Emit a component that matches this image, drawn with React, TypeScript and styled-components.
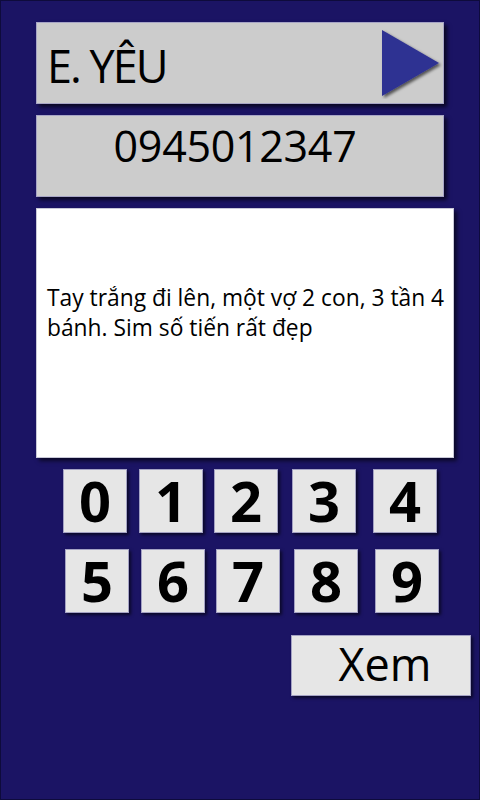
import React from "react";
import styled, { createGlobalStyle } from "styled-components";

const GlobalStyle = createGlobalStyle`
  html, body {
    margin: 0;
    padding: 0;
    background: #1b1464;
  }
  * { box-sizing: border-box; }
`;

const Page = styled.div`
  width: 480px;
  height: 800px;
  background: #1b1464;
  border: 1px solid #0e0b3c;
  padding: 21px 0 0 35px;
  display: flex;
  flex-direction: column;
  font-family: "Open Sans", "Noto Sans", sans-serif;
  color: #000;
  overflow: hidden;
`;

const Bar = styled.div<{ $centered?: boolean }>`
  width: 408px;
  height: 82px;
  background: #cccccc;
  border: 1px solid #a7a5c6;
  box-shadow: 3px 3px 4px rgba(0, 0, 0, 0.65);
  display: flex;
  align-items: ${(p) => (p.$centered ? "flex-start" : "center")};
  justify-content: ${(p) => (p.$centered ? "center" : "space-between")};
  padding: ${(p) => (p.$centered ? "4px 10px 0 0" : "0 0 0 10px")};
  & + & {
    margin-top: 11px;
  }
`;

const Name = styled.span`
  font-size: 45px;
  letter-spacing: -2px;
  line-height: 1;
  margin-top: 4px;
`;

const Phone = styled.span`
  font-size: 43px;
  line-height: 1.2;
  letter-spacing: -0.3px;
`;

const PlayIcon = styled.svg`
  width: 62px;
  height: 70px;
  display: block;
  margin-top: 2px;
`;

const Message = styled.div`
  margin-top: 11px;
  width: 418px;
  height: 250px;
  background: #ffffff;
  border: 1px solid #c8c8d8;
  box-shadow: 3px 3px 4px rgba(0, 0, 0, 0.6);
  padding: 74px 4px 0 10px;
  font-size: 22.8px;
  line-height: 30px;
`;

const KeyRow = styled.div<{ $offset: number }>`
  display: grid;
  grid-template-columns: 76px 75px 78px 81px 64px;
  margin-left: ${(p) => p.$offset}px;
  margin-top: ${(p) => (p.$offset > 28 ? 16 : 11)}px;
`;

const Key = styled.div`
  width: 64px;
  height: 64px;
  background: #e6e6e6;
  border: 1px solid #a4a2c4;
  box-shadow: 2px 2px 3px rgba(0, 0, 0, 0.6);
  display: flex;
  align-items: center;
  justify-content: center;
  font-size: 56px;
  font-weight: 700;
  line-height: 1;
  padding-bottom: 2px;
`;

const Actions = styled.div`
  display: flex;
  justify-content: flex-end;
  margin-top: 22px;
  padding-right: 8px;
`;

const ViewButton = styled.div`
  width: 180px;
  height: 61px;
  background: #e6e6e6;
  border: 1px solid #a4a2c4;
  box-shadow: 2px 2px 3px rgba(0, 0, 0, 0.6);
  display: flex;
  align-items: center;
  justify-content: center;
  font-size: 45px;
  line-height: 1;
  padding: 0 0 4px 8px;
`;

export default function App() {
  const row1 = ["0", "1", "2", "3", "4"];
  const row2 = ["5", "6", "7", "8", "9"];
  return (
    <>
      <GlobalStyle />
      <Page>
        <Bar>
          <Name>E. YÊU</Name>
          <PlayIcon viewBox="0 0 62 70">
            <defs>
              <filter id="sh" x="-20%" y="-20%" width="150%" height="150%">
                <feDropShadow dx="2" dy="2" stdDeviation="1.5" floodColor="#000" floodOpacity="0.6" />
              </filter>
            </defs>
            <polygon points="1,1 58,34 1,67" fill="#2e3192" filter="url(#sh)" />
          </PlayIcon>
        </Bar>
        <Bar $centered>
          <Phone>0945012347</Phone>
        </Bar>
        <Message>
          Tay trắng đi lên, một vợ 2 con, 3 tần 4 bánh. Sim số tiến rất đẹp
        </Message>
        <KeyRow $offset={27}>
          {row1.map((d) => (
            <Key key={d}>{d}</Key>
          ))}
        </KeyRow>
        <KeyRow $offset={29}>
          {row2.map((d) => (
            <Key key={d}>{d}</Key>
          ))}
        </KeyRow>
        <Actions>
          <ViewButton>Xem</ViewButton>
        </Actions>
      </Page>
    </>
  );
}
